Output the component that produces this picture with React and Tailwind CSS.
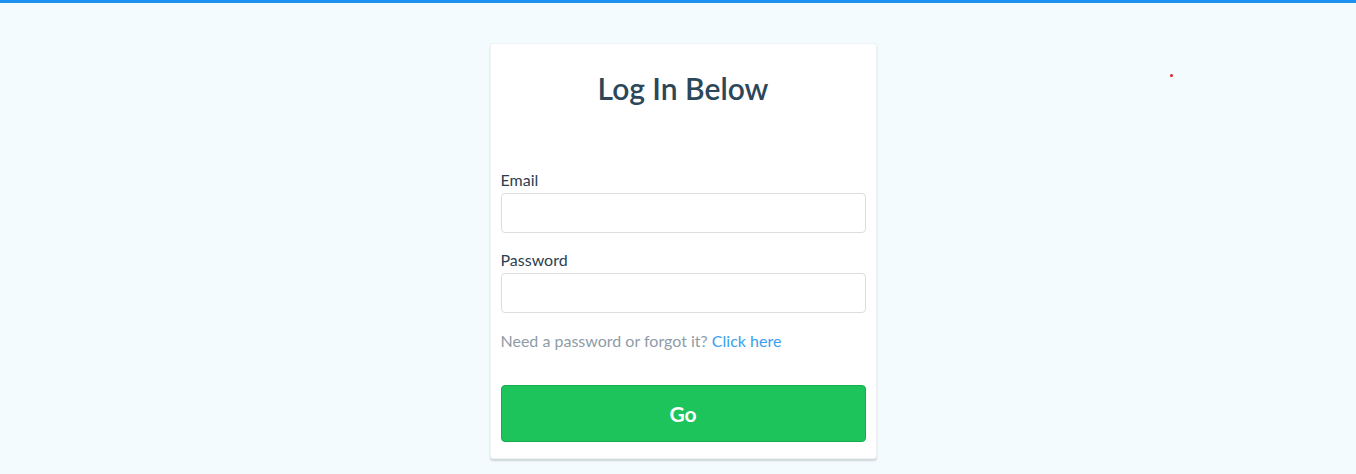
export default function App() {
  return (
    <div className="relative min-h-[474px] w-full bg-[#f3fbff] border-t-[3px] border-[#1e90f0] font-['Lato','Open_Sans',sans-serif]">
      <div className="absolute left-[1170px] top-[71px] h-[3px] w-[3px] rounded-full bg-[#e02020]" />
      <div className="flex justify-center pt-[40px] pl-[10px]">
        <div className="w-[387px] rounded-[3px] border border-[#eef2f5] bg-white px-[10px] pb-[16px] shadow-[0_2px_2px_rgba(0,0,0,0.15)]">
          <h1 className="pt-[24px] text-center text-[30px] leading-[40px] font-semibold text-[#2c4759]">Log In Below</h1>
          <div className="mt-[61px]">
            <label className="block text-[16px] leading-[22px] text-[#2c3e50]">Email</label>
            <input className="mt-[2px] block h-[40px] w-full rounded-[4px] border border-[#dddddd] bg-white" />
          </div>
          <div className="mt-[16px]">
            <label className="block text-[16px] leading-[22px] text-[#2c3e50]">Password</label>
            <input type="password" className="mt-[2px] block h-[40px] w-full rounded-[4px] border border-[#dddddd] bg-white" />
          </div>
          <p className="mt-[17px] text-[16px] leading-[22px] text-[#8f9ca6]">
            Need a password or forgot it? <a className="text-[#3aa0f0]">Click here</a>
          </p>
          <button className="mt-[33px] flex h-[57px] w-full items-center justify-center rounded-[4px] border border-[#17ad4e] bg-[#1cc45b] text-[21px] font-bold text-white">Go</button>
        </div>
      </div>
    </div>
  );
}
